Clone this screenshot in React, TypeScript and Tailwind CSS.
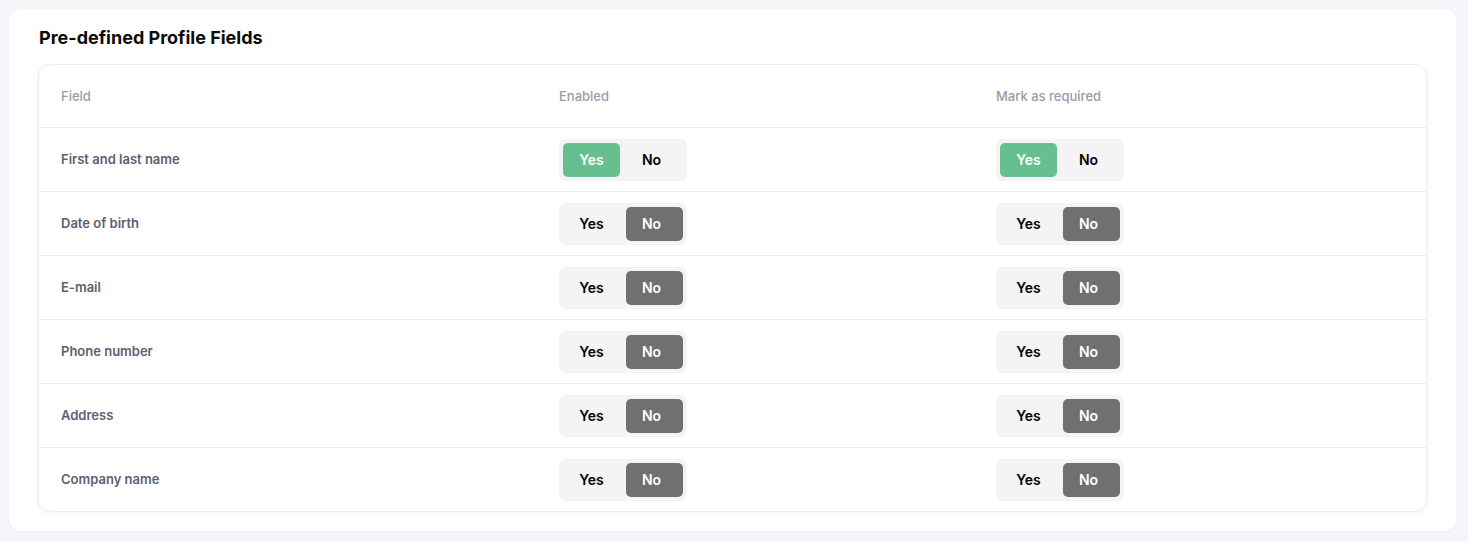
import React from "react";

const rows = [
  { label: "First and last name", enabled: true, required: true },
  { label: "Date of birth", enabled: false, required: false },
  { label: "E-mail", enabled: false, required: false },
  { label: "Phone number", enabled: false, required: false },
  { label: "Address", enabled: false, required: false },
  { label: "Company name", enabled: false, required: false },
];

function Toggle({ value }: { value: boolean }) {
  return (
    <div className="flex w-[128px] h-[42px] items-center gap-[6px] rounded-[6px] bg-[#f4f4f4] p-[4px]">
      <div
        className={
          "flex h-[34px] w-[57px] items-center justify-center rounded-[5px] text-[14px] font-semibold " +
          (value ? "bg-[#66bf8f] text-white" : "text-[#000000]")
        }
      >
        Yes
      </div>
      <div
        className={
          "flex h-[34px] w-[57px] items-center justify-center rounded-[5px] pr-[6px] text-[14px] font-semibold " +
          (!value ? "bg-[#707070] text-white" : "text-[#000000]")
        }
      >
        No
      </div>
    </div>
  );
}

export default function App() {
  return (
    <div
      className="min-h-[542px] w-full bg-[#f5f6fa] p-[9px] pr-[12px]"
      style={{ fontFamily: "Inter, 'Noto Sans', sans-serif" }}
    >
      <div className="rounded-[12px] bg-white px-[29px] pb-[19px] pt-[17px] shadow-[0_1px_3px_rgba(0,0,0,0.04)]">
        <h2 className="ml-[1px] text-[18px] font-bold leading-[24px] text-[#0b0b0b]">Pre-defined Profile Fields</h2>
        <div className="mt-[14px] overflow-hidden rounded-[12px] border border-[#ececec] shadow-[0_1px_4px_rgba(0,0,0,0.06)]">
          <div className="grid h-[62px] grid-cols-[498px_437px_1fr] items-center px-[22px] pt-[2px] text-[13px] font-medium text-[#9a9bab]">
            <div>Field</div>
            <div>Enabled</div>
            <div>Mark as required</div>
          </div>
          {rows.map((r) => (
            <div
              key={r.label}
              className="grid h-[64px] grid-cols-[498px_437px_1fr] items-center border-t border-[#ebebeb] px-[22px]"
            >
              <div className="text-[13px] font-semibold text-[#5d6073]">{r.label}</div>
              <div>
                <Toggle value={r.enabled} />
              </div>
              <div>
                <Toggle value={r.required} />
              </div>
            </div>
          ))}
        </div>
      </div>
    </div>
  );
}
